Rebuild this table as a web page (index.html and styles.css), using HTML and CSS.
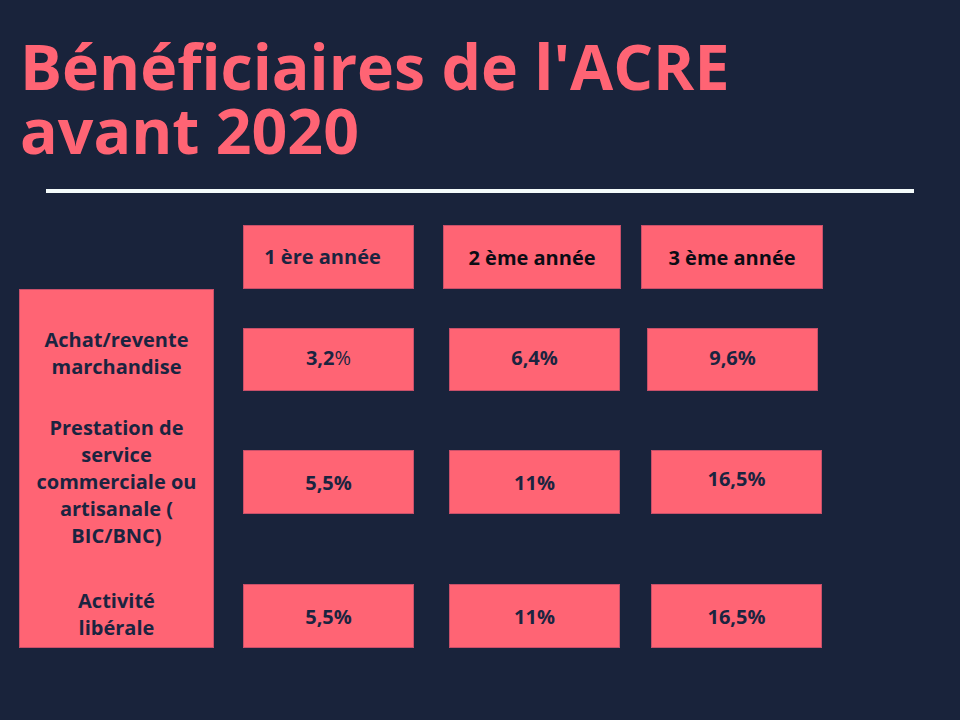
FILE: index.html
```html
<!DOCTYPE html>
<html lang="fr">
<head>
<meta charset="utf-8">
<title>Bénéficiaires de l'ACRE avant 2020</title>
<link rel="stylesheet" href="styles.css">
</head>
<body>
<main class="page">
  <h1 class="title">Bénéficiaires de l'ACRE<br>avant 2020</h1>
  <div class="rule"></div>
  <section class="table">
    <div class="labels">
      <div class="label label-1">Achat/revente<br>marchandise</div>
      <div class="label label-2">Prestation de<br>service<br>commerciale ou<br>artisanale (<br>BIC/BNC)</div>
      <div class="label label-3">Activité<br>libérale</div>
    </div>
    <div class="cols">
      <div class="row row-head">
        <div class="cell head h1c"><span class="shift-left">1 ère année</span></div>
        <div class="cell head h2c black">2 ème année</div>
        <div class="cell head h3c black">3 ème année</div>
      </div>
      <div class="row row-1">
        <div class="cell val up">3,2<span class="thin">%</span></div>
        <div class="cell val up">6,4%</div>
        <div class="cell val up">9,6%</div>
      </div>
      <div class="row row-2">
        <div class="cell val">5,5%</div>
        <div class="cell val">11%</div>
        <div class="cell val up2">16,5%</div>
      </div>
      <div class="row row-3">
        <div class="cell val">5,5%</div>
        <div class="cell val">11%</div>
        <div class="cell val">16,5%</div>
      </div>
    </div>
  </section>
</main>
</body>
</html>
```
FILE: styles.css
```css
html, body {
  margin: 0;
  padding: 0;
  background: #19233b;
}
body {
  width: 960px;
  height: 720px;
  overflow: hidden;
  font-family: "Open Sans", "DejaVu Sans", sans-serif;
  font-weight: 700;
  color: #1b2440;
}
.page {
  padding-top: 34px;
}
.title {
  margin: 0 0 0 20px;
  font-size: 62.6px;
  line-height: 64px;
  font-weight: 700;
  color: #ff6474;
  letter-spacing: 0;
}
.rule {
  margin: 27px 0 0 46px;
  width: 868px;
  height: 4px;
  background: #f4fbfb;
}
.table {
  display: flex;
  margin-top: 32px;
  margin-left: 19px;
}
.labels {
  box-sizing: border-box;
  margin-top: 64px;
  width: 195px;
  height: 359px;
  background: #ff6474;
  border: 1px solid #c8506a;
  display: flex;
  flex-direction: column;
  align-items: center;
  text-align: center;
  font-size: 20px;
  line-height: 27px;
}
.label-1 { margin-top: 36px; }
.label-2 { margin-top: 34px; }
.label-3 { margin-top: 38px; }
.cols {
  margin-left: 29px;
  display: flex;
  flex-direction: column;
}
.row {
  display: flex;
}
.cell {
  box-sizing: border-box;
  width: 171px;
  height: 64px;
  background: #ff6474;
  border: 1px solid #c8506a;
  display: flex;
  align-items: center;
  justify-content: center;
  font-size: 20px;
}
.row-head .h2c { width: 178px; margin-left: 29px; }
.row-head .h3c { width: 182px; margin-left: 20px; }
.head { font-size: 20px; }
.shift-left { margin-right: 12px; margin-bottom: 2px; }
.black { color: #0c0c14; }
.row-1 { margin-top: 39px; }
.row-1 .cell { height: 63px; }
.row-1 .cell + .cell { margin-left: 35px; }
.row-1 .cell + .cell + .cell { margin-left: 27px; }
.row-2 { margin-top: 59px; }
.row-2 .cell + .cell { margin-left: 35px; }
.row-2 .cell + .cell + .cell { margin-left: 31px; }
.row-3 { margin-top: 70px; }
.row-3 .cell + .cell { margin-left: 35px; }
.row-3 .cell + .cell + .cell { margin-left: 31px; }
.val { font-size: 20px; }
.up { padding-bottom: 4px; }
.up2 { padding-bottom: 7px; }
.thin { font-weight: 400; }
```
